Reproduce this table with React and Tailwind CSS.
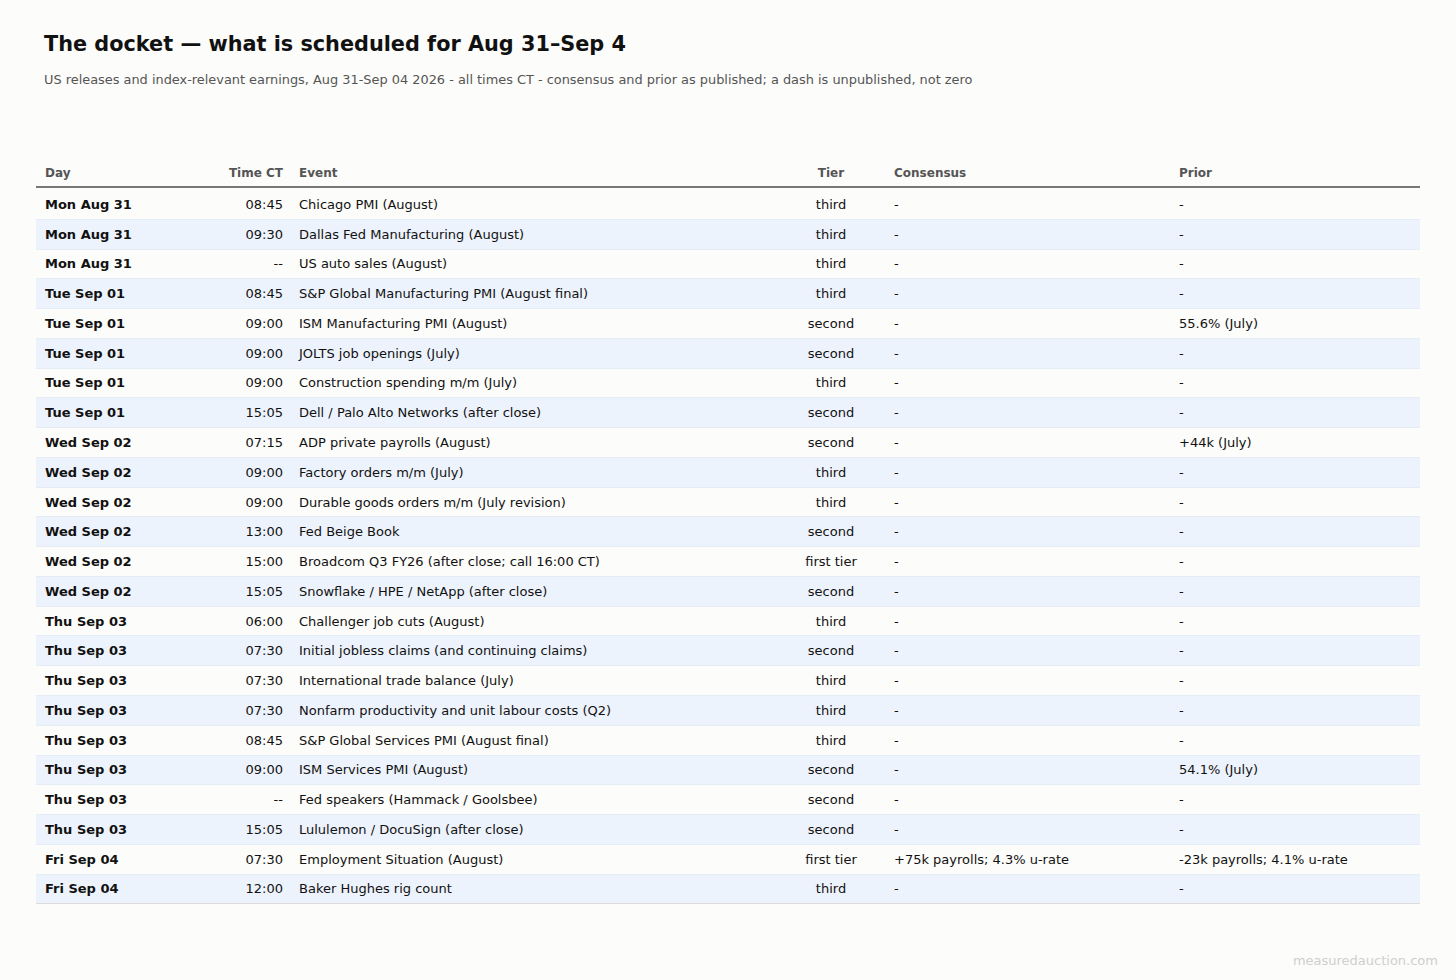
import React from "react";

const rows = [
  ["Mon Aug 31", "08:45", "Chicago PMI (August)", "third", "-", "-"],
  ["Mon Aug 31", "09:30", "Dallas Fed Manufacturing (August)", "third", "-", "-"],
  ["Mon Aug 31", "--", "US auto sales (August)", "third", "-", "-"],
  ["Tue Sep 01", "08:45", "S&P Global Manufacturing PMI (August final)", "third", "-", "-"],
  ["Tue Sep 01", "09:00", "ISM Manufacturing PMI (August)", "second", "-", "55.6% (July)"],
  ["Tue Sep 01", "09:00", "JOLTS job openings (July)", "second", "-", "-"],
  ["Tue Sep 01", "09:00", "Construction spending m/m (July)", "third", "-", "-"],
  ["Tue Sep 01", "15:05", "Dell / Palo Alto Networks (after close)", "second", "-", "-"],
  ["Wed Sep 02", "07:15", "ADP private payrolls (August)", "second", "-", "+44k (July)"],
  ["Wed Sep 02", "09:00", "Factory orders m/m (July)", "third", "-", "-"],
  ["Wed Sep 02", "09:00", "Durable goods orders m/m (July revision)", "third", "-", "-"],
  ["Wed Sep 02", "13:00", "Fed Beige Book", "second", "-", "-"],
  ["Wed Sep 02", "15:00", "Broadcom Q3 FY26 (after close; call 16:00 CT)", "first tier", "-", "-"],
  ["Wed Sep 02", "15:05", "Snowflake / HPE / NetApp (after close)", "second", "-", "-"],
  ["Thu Sep 03", "06:00", "Challenger job cuts (August)", "third", "-", "-"],
  ["Thu Sep 03", "07:30", "Initial jobless claims (and continuing claims)", "second", "-", "-"],
  ["Thu Sep 03", "07:30", "International trade balance (July)", "third", "-", "-"],
  ["Thu Sep 03", "07:30", "Nonfarm productivity and unit labour costs (Q2)", "third", "-", "-"],
  ["Thu Sep 03", "08:45", "S&P Global Services PMI (August final)", "third", "-", "-"],
  ["Thu Sep 03", "09:00", "ISM Services PMI (August)", "second", "-", "54.1% (July)"],
  ["Thu Sep 03", "--", "Fed speakers (Hammack / Goolsbee)", "second", "-", "-"],
  ["Thu Sep 03", "15:05", "Lululemon / DocuSign (after close)", "second", "-", "-"],
  ["Fri Sep 04", "07:30", "Employment Situation (August)", "first tier", "+75k payrolls; 4.3% u-rate", "-23k payrolls; 4.1% u-rate"],
  ["Fri Sep 04", "12:00", "Baker Hughes rig count", "third", "-", "-"],
];

export default function App() {
  return (
    <div className="min-h-[980px] w-full bg-[#fcfcfa] font-['DejaVu_Sans',sans-serif] text-[#111]">
      <div className="pt-[30px] pl-[44px]">
        <h1 className="text-[20.8px] leading-[28px] font-bold text-[#111]">
          The docket — what is scheduled for Aug 31–Sep 4
        </h1>
        <p className="mt-[14px] text-[12.9px] leading-[16px] text-[#555]">
          US releases and index-relevant earnings, Aug 31-Sep 04 2026 - all times CT - consensus and prior as published; a dash is unpublished, not zero
        </p>
      </div>
      <table className="ml-[36px] mt-[68px] w-[1384px] table-fixed border-collapse text-[13px]">
        <colgroup>
          <col className="w-[164px]" />
          <col className="w-[91px]" />
          <col className="w-[485px]" />
          <col className="w-[110px]" />
          <col className="w-[285px]" />
          <col className="w-[249px]" />
        </colgroup>
        <thead>
          <tr className="border-b-2 border-[#777]">
            <th className="pl-[9px] pr-2 pt-[10px] pb-[6px] text-left text-[12px] leading-[14px] font-bold text-[#555]">Day</th>
            <th className="px-2 pt-[10px] pb-[6px] text-right text-[12px] leading-[14px] font-bold text-[#555]">Time CT</th>
            <th className="px-2 pt-[10px] pb-[6px] text-left text-[12px] leading-[14px] font-bold text-[#555]">Event</th>
            <th className="px-2 pt-[10px] pb-[6px] text-center text-[12px] leading-[14px] font-bold text-[#555]">Tier</th>
            <th className="px-2 pt-[10px] pb-[6px] text-left text-[12px] leading-[14px] font-bold text-[#555]">Consensus</th>
            <th className="px-2 pt-[10px] pb-[6px] text-left text-[12px] leading-[14px] font-bold text-[#555]">Prior</th>
          </tr>
        </thead>
        <tbody>
          {rows.map((r, i) => {
            const last = i === rows.length - 1;
            const first = i === 0;
            const cell = first ? "pt-[2.5px] pb-0 leading-[15px] text-[#111]" : "py-0 leading-[15px] text-[#111]";
            return (
              <tr
                key={i}
                className={
                  (i % 2 === 1 ? "bg-[#edf3fc] " : "bg-[#fcfcfa] ") +
                  (last ? "border-b border-[#dcdcdc]" : "border-b border-[#e6ecf5]")
                }
              >
                <td className={(first ? "h-[32.28px] " : "h-[29.78px] ") + "pl-[9px] pr-2 font-bold " + cell}>{r[0]}</td>
                <td className={"px-2 text-right " + cell}>{r[1]}</td>
                <td className={"px-2 " + cell}>{r[2]}</td>
                <td className={"px-2 text-center " + cell}>{r[3]}</td>
                <td className={"px-2 " + cell}>{r[4]}</td>
                <td className={"px-2 " + cell}>{r[5]}</td>
              </tr>
            );
          })}
        </tbody>
      </table>
      <div className="mt-[49px] pr-[18px] text-right text-[13px] leading-[16px] text-[#cfcfcf]">
        measuredauction.com
      </div>
    </div>
  );
}
